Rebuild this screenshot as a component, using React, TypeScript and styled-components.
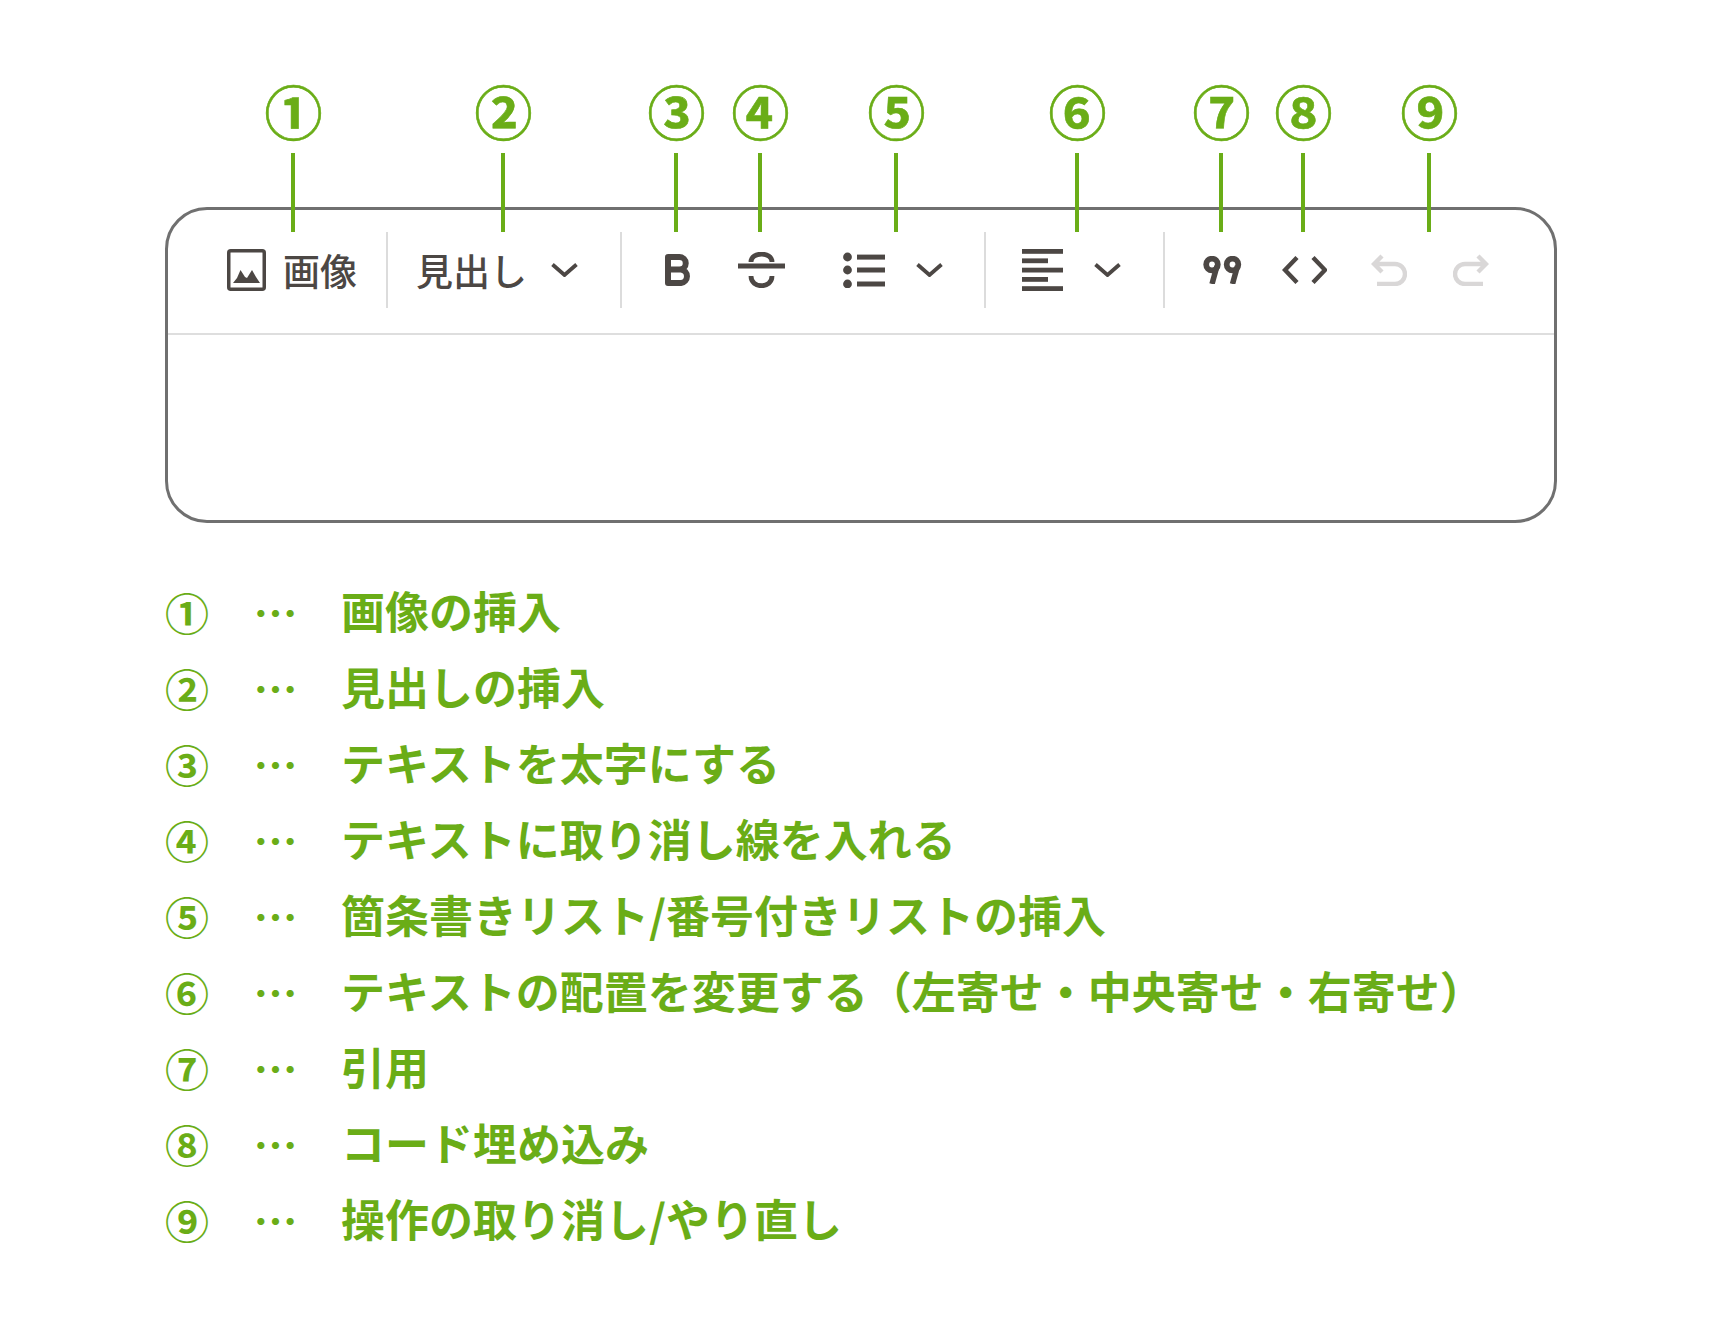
import React from "react";
import styled, { createGlobalStyle } from "styled-components";

const GREEN = "#6aad17";
const INK = "#4c4744";
const MUTED = "#d9d7d7";

const Global = createGlobalStyle`
  html, body { margin: 0; padding: 0; background: #fff; }
  body { font-family: "Noto Sans CJK JP", "Noto Sans", sans-serif; }
`;

const Page = styled.div`
  width: 1722px;
  height: 1331px;
  padding: 81px 0 0 167px;
  box-sizing: border-box;
  overflow: hidden;
`;

const MarkerRow = styled.div`
  display: flex;
  position: relative;
  z-index: 1;
  height: 151px;
  margin-bottom: -25px;
`;

const Marker = styled.div<{ $ml: number }>`
  width: 60px;
  margin-left: ${(p) => p.$ml}px;
  display: flex;
  flex-direction: column;
  align-items: center;
  color: ${GREEN};
`;

const MarkerGlyph = styled.span`
  font-size: 58px;
  line-height: 58px;
  height: 72px;
  font-weight: 700;
  -webkit-text-stroke: 0.6px ${GREEN};
  transform: translateX(0.5px);
`;

const MarkerLine = styled.span`
  width: 4px;
  height: 79px;
  background: ${GREEN};
`;

const Editor = styled.div`
  width: 1392px;
  height: 316px;
  margin-left: -2px;
  box-sizing: border-box;
  border: 3px solid #707070;
  border-radius: 42px;
  background: #fff;
`;

const Toolbar = styled.div`
  height: 125px;
  padding-bottom: 3px;
  box-sizing: border-box;
  border-bottom: 2px solid #dedede;
  display: flex;
  align-items: center;
  padding-left: 59px;
  color: ${INK};
`;

const Tool = styled.div<{ $ml?: number; $muted?: boolean }>`
  display: flex;
  margin-left: ${(p) => p.$ml ?? 0}px;
  color: ${(p) => (p.$muted ? MUTED : INK)};
`;

const ToolLabel = styled.span<{ $ml: number }>`
  margin-left: ${(p) => p.$ml}px;
  font-size: 37px;
  line-height: 44px;
  font-weight: 500;
  color: ${INK};
`;

const Separator = styled.span<{ $ml: number }>`
  width: 2px;
  height: 76px;
  margin-left: ${(p) => p.$ml}px;
  background: #dcdcdc;
`;

const Legend = styled.ol`
  list-style: none;
  margin: 47.5px 0 0;
  padding: 0;
`;

const LegendRow = styled.li`
  display: grid;
  grid-template-columns: 86.5px 87.5px 1fr;
  height: 76.05px;
  align-items: center;
  color: ${GREEN};
  font-size: 44px;
  line-height: 76px;
  font-weight: 700;
  white-space: nowrap;
`;

const LegendNumber = styled.span`
  margin: 3px 0 0 -2px;
`;

const Dots = styled.span`
  margin-top: 1px;
`;

const LegendText = styled.span``;

const Chevron = () => (
  <svg width="27" height="14" viewBox="0 0 27 14" fill="none" stroke="currentColor" strokeWidth="3.8">
    <path d="M1.5 1.500 13.500 12 25.500 1.500" />
  </svg>
);

const ImageIcon = () => (
  <svg width="39" height="42" viewBox="0 0 39 42" fill="none">
    <rect x="1.750" y="1.750" width="35.500" height="38.500" rx="2" stroke="currentColor" strokeWidth="3.500" />
    <path d="M6 34 10 29 13.500 21 18 28 20 29 25 21 29 28 33 34Z" fill="currentColor" />
  </svg>
);

const BoldIcon = () => (
  <svg width="25" height="32" viewBox="0 0 25 32" fill="none" stroke="currentColor" strokeWidth="6">
    <path d="M3 3H14.500A6.200 6.200 0 0 1 14.500 15.500H3ZM3 15.500H16A6.800 6.800 0 0 1 16 29H3Z" strokeLinejoin="round" />
  </svg>
);

const StrikeIcon = () => (
  <svg width="47" height="36" viewBox="0 0 47 36" fill="none" stroke="currentColor">
    <path d="M0 14H47" strokeWidth="5" />
    <path d="M13 10C13 -0.500 34 -0.500 34 10M13 24C13 37 34 37 34 24" strokeWidth="4.800" />
  </svg>
);

const ListIcon = () => (
  <svg width="42" height="36" viewBox="0 0 42 36" fill="currentColor">
    <circle cx="4.500" cy="5" r="4.400" />
    <circle cx="4.500" cy="18" r="4.400" />
    <circle cx="4.500" cy="32" r="4.400" />
    <rect x="14" y="2.600" width="28" height="5" />
    <rect x="14" y="15.500" width="28" height="5" />
    <rect x="14" y="29.500" width="28" height="5" />
  </svg>
);

const AlignIcon = () => (
  <svg width="41" height="42" viewBox="0 0 41 42" fill="currentColor">
    <rect y="0" width="41" height="4.800" />
    <rect y="9.400" width="26" height="4.800" />
    <rect y="18.700" width="41" height="4.800" />
    <rect y="28" width="26" height="4.800" />
    <rect y="37.200" width="41" height="4.800" />
  </svg>
);

const QuoteIcon = () => (
  <svg width="39" height="28" viewBox="0 0 39 28" fill="none" stroke="currentColor">
    <circle cx="9" cy="8.500" r="5.800" strokeWidth="5.800" />
    <path d="M14 10 9 28" strokeWidth="5.500" />
    <circle cx="29.500" cy="8.500" r="5.800" strokeWidth="5.800" />
    <path d="M34.500 10 29.500 28" strokeWidth="5.500" />
  </svg>
);

const CodeIcon = () => (
  <svg width="45" height="28" viewBox="0 0 45 28" fill="none" stroke="currentColor" strokeWidth="4.400">
    <path d="M15 1.500 3 14 15 26.500M31 1.500 43 14 31 26.500" />
  </svg>
);

const UndoIcon = () => (
  <svg width="36" height="32" viewBox="0 0 36 32" fill="none" stroke="currentColor" strokeWidth="4.400">
    <path d="M11 2 3 10 11 18M3 10H24A9.500 9.500 0 0 1 24 30H6" />
  </svg>
);

const RedoIcon = () => (
  <svg width="36" height="32" viewBox="0 0 36 32" fill="none" stroke="currentColor" strokeWidth="4.400">
    <path d="M25 2 33 10 25 18M33 10H12A9.500 9.500 0 0 0 12 30H30" />
  </svg>
);

const markers = [
  { glyph: "①", ml: 96 },
  { glyph: "②", ml: 150 },
  { glyph: "③", ml: 113 },
  { glyph: "④", ml: 24 },
  { glyph: "⑤", ml: 76 },
  { glyph: "⑥", ml: 121 },
  { glyph: "⑦", ml: 84 },
  { glyph: "⑧", ml: 22 },
  { glyph: "⑨", ml: 66 },
];

const legend = [
  ["①", "画像の挿入"],
  ["②", "見出しの挿入"],
  ["③", "テキストを太字にする"],
  ["④", "テキストに取り消し線を入れる"],
  ["⑤", "箇条書きリスト/番号付きリストの挿入"],
  ["⑥", "テキストの配置を変更する（左寄せ・中央寄せ・右寄せ）"],
  ["⑦", "引用"],
  ["⑧", "コード埋め込み"],
  ["⑨", "操作の取り消し/やり直し"],
];

export default function App() {
  return (
    <Page>
      <Global />
      <MarkerRow>
        {markers.map((m) => (
          <Marker key={m.glyph} $ml={m.ml}>
            <MarkerGlyph>{m.glyph}</MarkerGlyph>
            <MarkerLine />
          </Marker>
        ))}
      </MarkerRow>
      <Editor>
        <Toolbar>
          <Tool><ImageIcon /></Tool>
          <ToolLabel $ml={17}>画像</ToolLabel>
          <Separator $ml={29} />
          <ToolLabel $ml={28}>見出し</ToolLabel>
          <Tool $ml={24}><Chevron /></Tool>
          <Separator $ml={42} />
          <Tool $ml={43}><BoldIcon /></Tool>
          <Tool $ml={48}><StrikeIcon /></Tool>
          <Tool $ml={58}><ListIcon /></Tool>
          <Tool $ml={31}><Chevron /></Tool>
          <Separator $ml={41} />
          <Tool $ml={36}><AlignIcon /></Tool>
          <Tool $ml={31}><Chevron /></Tool>
          <Separator $ml={42} />
          <Tool $ml={38}><QuoteIcon /></Tool>
          <Tool $ml={40}><CodeIcon /></Tool>
          <Tool $ml={44} $muted><UndoIcon /></Tool>
          <Tool $ml={46} $muted><RedoIcon /></Tool>
        </Toolbar>
      </Editor>
      <Legend>
        {legend.map(([n, text]) => (
          <LegendRow key={n}>
            <LegendNumber>{n}</LegendNumber>
            <Dots>…</Dots>
            <LegendText>{text}</LegendText>
          </LegendRow>
        ))}
      </Legend>
    </Page>
  );
}
